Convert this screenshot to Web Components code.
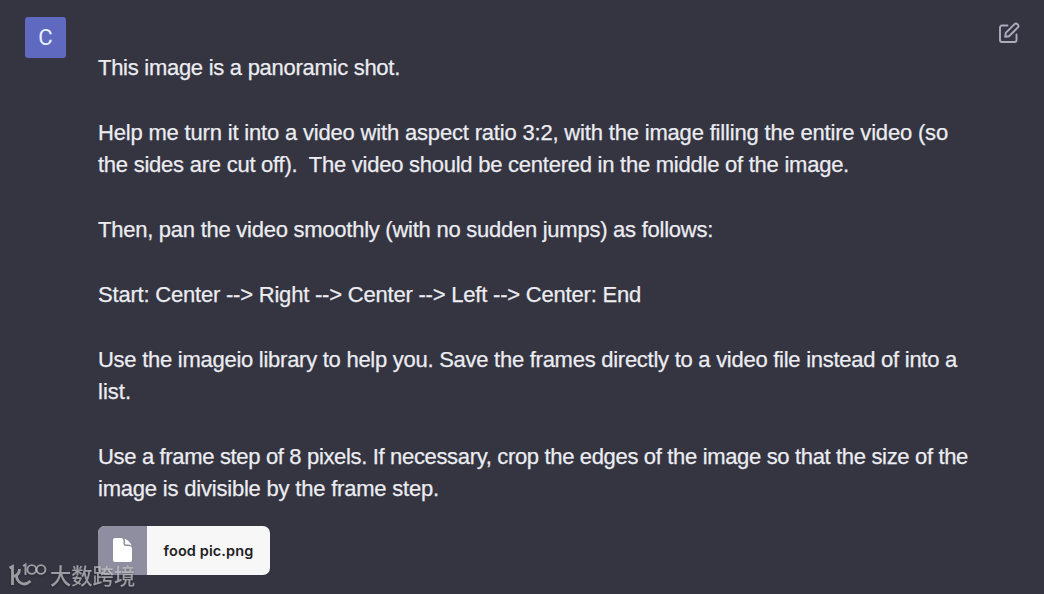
<!DOCTYPE html>
<html lang="en">
<head>
<meta charset="utf-8">
<title>Chat</title>
<style>
    body {
        margin: 0;
        background: #343541;
        overflow: hidden;
    }
</style>
</head>
<body>
<chat-message>
    <user-avatar slot="avatar">C</user-avatar>
    <edit-button slot="action"></edit-button>
    <text-line width="302">This image is a panoramic shot.</text-line>
    <text-line></text-line>
    <text-line width="850">Help me turn it into a video with aspect ratio 3:2, with the image filling the entire video (so</text-line>
    <text-line width="751">the sides are cut off).&nbsp; The video should be centered in the middle of the image.</text-line>
    <text-line></text-line>
    <text-line width="615">Then, pan the video smoothly (with no sudden jumps) as follows:</text-line>
    <text-line></text-line>
    <text-line width="543">Start: Center --&gt; Right --&gt; Center --&gt; Left --&gt; Center: End</text-line>
    <text-line></text-line>
    <text-line width="859">Use the imageio library to help you. Save the frames directly to a video file instead of into a</text-line>
    <text-line width="33">list.</text-line>
    <text-line></text-line>
    <text-line width="870">Use a frame step of 8 pixels. If necessary, crop the edges of the image so that the size of the</text-line>
    <text-line width="341">image is divisible by the frame step.</text-line>
    <file-chip slot="file">food pic.png</file-chip>
</chat-message>
<water-mark>大数跨境</water-mark>

<script>
function define(name, html, setup) {
    const template = document.createElement('template');
    template.innerHTML = html;

    window.customElements.define(name, class extends HTMLElement {
        constructor() {
            super();
            this.attachShadow({mode: 'open'});
            this.shadowRoot.appendChild(template.content.cloneNode(true));
        }

        connectedCallback() {
            if (setup) setup(this);
        }
    });
}

define('chat-message', `
    <style>
        :host {
            display: grid;
            grid-template-columns: 41px 1fr 22px;
            column-gap: 32px;
            box-sizing: border-box;
            height: 594px;
            padding: 17px 24px 0 25px;
            color: #ececf1;
            font: 22px/32.46px "Liberation Sans", Arial, sans-serif;
        }
        .content {
            padding-top: 34.6px;
            white-space: nowrap;
            min-width: 0;
            -webkit-text-stroke: 0.25px currentColor;
        }
        .file {
            margin-top: 20px;
            -webkit-text-stroke: 0;
        }
    </style>
    <slot name="avatar"></slot>
    <div class="content">
        <slot></slot>
        <div class="file"><slot name="file"></slot></div>
    </div>
    <slot name="action"></slot>
`);

define('user-avatar', `
    <style>
        :host {
            display: flex;
            align-items: center;
            justify-content: center;
            width: 41px;
            height: 41px;
            border-radius: 3px;
            background: #5f69c0;
            color: #e9f3ff;
            font: 22px/42px Roboto, sans-serif;
        }
    </style>
    <slot></slot>
`);

define('edit-button', `
    <style>
        :host {
            display: block;
            padding-top: 5px;
            color: #acacbe;
        }
        svg {
            display: block;
        }
    </style>
    <svg width="22" height="22" viewBox="0 0 22 22" fill="none" stroke="currentColor" stroke-width="1.9" stroke-linecap="round" stroke-linejoin="round">
        <path d="M9.500 3.500H4a2 2 0 0 0-2 2V18a2 2 0 0 0 2 2h12.500a2 2 0 0 0 2-2v-5.500"/>
        <path d="M16.300 2.300a2.350 2.350 0 0 1 3.350 3.350L11 14.200l-3.800.6.600-3.900z"/>
    </svg>
`);

// the tracking is set so that the line fills its width
define('text-line', `
    <style>
        :host {
            display: block;
            height: 32.46px;
        }
    </style>
    <span><slot></slot></span>
`, el => {
    const width = Number(el.getAttribute('width'));
    if (!width) return;
    const span = el.shadowRoot.querySelector('span');
    const natural = span.getBoundingClientRect().width;
    span.style.letterSpacing = (width - natural) / el.textContent.length + 'px';
});

define('file-chip', `
    <style>
        :host {
            display: flex;
            width: 172px;
            height: 49px;
            border-radius: 7px;
            overflow: hidden;
            background: #f7f7f8;
            color: #202123;
            font: 600 14.5px/50px "Inter", sans-serif;
            letter-spacing: 0.1px;
        }
        .icon {
            display: flex;
            align-items: center;
            justify-content: center;
            width: 49px;
            background: #8e8ea0;
        }
        .name {
            flex: 1;
            text-align: center;
        }
    </style>
    <div class="icon">
        <svg width="19" height="24" viewBox="0 0 19 24" fill="#fff">
            <path d="M2 0H8.500Q10.500 0.500 10.500 3V5.500Q10.500 8 13 8H16Q19 8 19 11V22Q19 24 17 24H2Q0 24 0 22V2Q0 0 2 0Z"/>
            <path d="M11.500 0.500Q15 2 16.500 4Q18.400 6 18.500 7.500Q17 6.500 15 6.500H13Q12 6.500 12 5.500V3Q12 1.500 11.500 0.500Z"/>
        </svg>
    </div>
    <div class="name"><slot></slot></div>
`);

define('water-mark', `
    <style>
        :host {
            position: absolute;
            left: 9px;
            top: 560px;
            display: flex;
            align-items: center;
            gap: 3px;
            color: rgba(200, 200, 204, 0.72);
            font: 500 21.3px/29px "Noto Sans CJK SC", sans-serif;
            filter: drop-shadow(0 1px 1px rgba(0, 0, 0, 0.35));
        }
    </style>
    <svg width="38" height="26" viewBox="0 0 38 26" fill="none" stroke="currentColor">
        <path d="M0.500 6L3.500 4.500V23M3.500 14.500C8 14 10.500 11 10.500 7M7.500 13.500C8 21 15 25 21.500 19" stroke-width="2.800"/>
        <path d="M14 4L16.500 2.500V13" stroke-width="2"/>
        <circle cx="22.800" cy="7.500" r="4.400" stroke-width="1.900"/>
        <circle cx="32" cy="7.500" r="4.400" stroke-width="1.900"/>
    </svg>
    <slot></slot>
`);
</script>
</body>
</html>
